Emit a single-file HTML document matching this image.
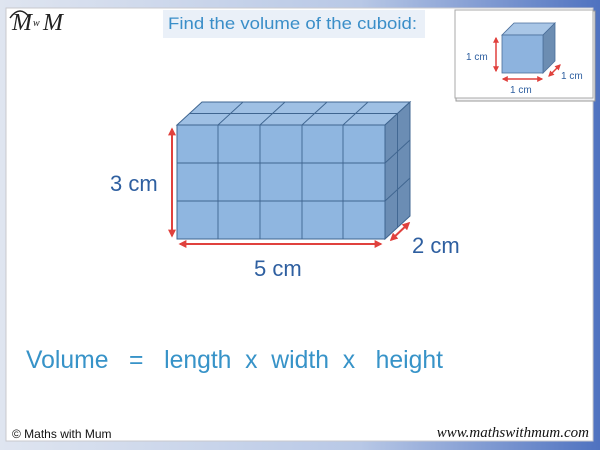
<!DOCTYPE html>
<html><head><meta charset="utf-8"><style>
html,body{margin:0;padding:0;width:600px;height:450px;overflow:hidden;background:#fff}
</style></head><body>
<svg width="600" height="450" viewBox="0 0 600 450" xmlns="http://www.w3.org/2000/svg" font-family="Liberation Sans, DejaVu Sans, sans-serif">
<defs>
<linearGradient id="bg" x1="0" x2="1" y1="0" y2="0"><stop offset="0" stop-color="#dfe5f0"/><stop offset="0.6" stop-color="#b8c8e6"/><stop offset="1" stop-color="#4f72c0"/></linearGradient>
<marker id="ah" viewBox="0 0 10 10" refX="8" refY="5" markerWidth="4" markerHeight="4" orient="auto-start-reverse"><path d="M0,0 L10,5 L0,10 z" fill="#e0413d"/></marker>
</defs>
<rect width="600" height="450" fill="url(#bg)"/>
<rect x="6" y="8" width="587" height="433" fill="#fff" stroke="#c8c8cc"/>
<text x="12" y="30" font-family="Liberation Serif, serif" font-style="italic" font-size="24" fill="#222">M</text>
<text x="33" y="26" font-family="Liberation Serif, serif" font-style="italic" font-size="10" fill="#222">w</text>
<text x="43" y="30" font-family="Liberation Serif, serif" font-style="italic" font-size="24" fill="#222">M</text>
<path d="M10,18 Q20,4 30,18" fill="none" stroke="#222" stroke-width="1.5"/>
<rect x="163" y="10" width="262" height="28" fill="#eaf0f8"/>
<text x="168" y="29" font-size="17" fill="#3a8ec8" textLength="249" lengthAdjust="spacingAndGlyphs">Find the volume of the cuboid:</text>
<rect x="456" y="11" width="139" height="90" fill="#f2f2f4" stroke="#999" stroke-width="1"/>
<rect x="455" y="10" width="138" height="88" fill="#fff" stroke="#a8a8a8"/>
<polygon points="502,35 514,23 555,23 543,35" fill="#a9c6e6" stroke="#4a6e9a" stroke-width="0.8"/>
<polygon points="543,35 555,23 555,61 543,73" fill="#6c8db2" stroke="#4a6e9a" stroke-width="0.8"/>
<rect x="502" y="35" width="41" height="38" fill="#8db3de" stroke="#4a6e9a" stroke-width="0.8"/>
<line x1="496" y1="38" x2="496" y2="71" stroke="#e0413d" stroke-width="1.5" marker-start="url(#ah)" marker-end="url(#ah)"/>
<line x1="503" y1="79" x2="542" y2="79" stroke="#e0413d" stroke-width="1.5" marker-start="url(#ah)" marker-end="url(#ah)"/>
<line x1="549" y1="76" x2="560" y2="65" stroke="#e0413d" stroke-width="1.5" marker-start="url(#ah)" marker-end="url(#ah)"/>
<text x="466" y="60" font-size="10" fill="#2e5fa0">1 cm</text>
<text x="510" y="93" font-size="10" fill="#2e5fa0">1 cm</text>
<text x="561" y="79" font-size="10" fill="#2e5fa0">1 cm</text>
<g stroke="#3f6590" stroke-width="1">
<polygon points="177,125 202,102 410,102 385,125" fill="#9fc0e4"/>
<polygon points="385,125 410,102 410,216 385,239" fill="#6b8db4"/>
<rect x="177" y="125" width="208" height="114" fill="#8fb6e0"/>
</g>
<g stroke="#3f6590" stroke-width="0.9" fill="none">
<path d="M218,125V239M260,125V239M302,125V239M343,125V239M177,163H385M177,201H385"/>
<path d="M189.5,113.5H397.5M218,125L243,102M260,125L285,102M302,125L327,102M343,125L368,102"/>
<path d="M397.5,113.5V227.5M385,163L410,140M385,201L410,178"/>
</g>
<line x1="172" y1="129" x2="172" y2="236" stroke="#e0413d" stroke-width="2" marker-start="url(#ah)" marker-end="url(#ah)"/>
<line x1="180" y1="244" x2="381" y2="244" stroke="#e0413d" stroke-width="2" marker-start="url(#ah)" marker-end="url(#ah)"/>
<line x1="391" y1="240" x2="409" y2="223" stroke="#e0413d" stroke-width="2" marker-start="url(#ah)" marker-end="url(#ah)"/>
<text x="110" y="191" font-size="22" fill="#2e5fa0">3 cm</text>
<text x="254" y="276" font-size="22" fill="#2e5fa0">5 cm</text>
<text x="412" y="253" font-size="22" fill="#2e5fa0">2 cm</text>
<text x="26" y="368" font-size="25" fill="#3793c8" textLength="417" lengthAdjust="spacingAndGlyphs" xml:space="preserve">Volume   =   length  x  width  x   height</text>
<text x="12" y="438" font-size="12" fill="#111">© Maths with Mum</text>
<text x="589" y="437" text-anchor="end" font-family="Liberation Serif, serif" font-style="italic" font-size="15" fill="#111">www.mathswithmum.com</text>
</svg>
</body></html>
